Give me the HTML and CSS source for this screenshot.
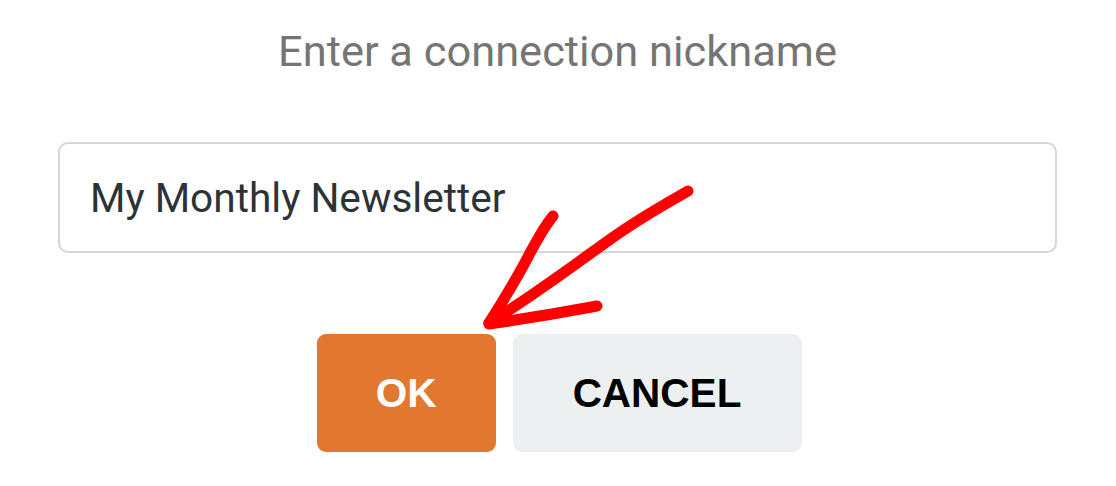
FILE: index.html
```html
<!DOCTYPE html>
<html lang="en">
<head>
<meta charset="UTF-8">
<title>Connection nickname</title>
<link rel="stylesheet" href="styles.css">
</head>
<body>
  <div class="dialog">
    <div class="title">Enter a connection nickname</div>
    <div class="field">My Monthly Newsletter</div>
    <div class="actions">
      <button class="btn ok">OK</button>
      <button class="btn cancel">CANCEL</button>
    </div>

    <svg class="arrow" width="1116" height="486" viewBox="0 0 1116 486">
      <path d="M688 191 C660 207 640 218 612 238 C570 268 530 298 489 323" />
      <path d="M553 216 C540 232 532 250 522 268 C512 286 500 306 489 323" />
      <path d="M597 306 C565 312 530 318 489 324" />
    </svg>
  </div>
</body>
</html>
```

FILE: styles.css
```css
body {
  margin: 0;
  background: #fff;
  font-family: Roboto, "Liberation Sans", sans-serif;
}

.dialog {
  position: relative;
  width: 1116px;
  height: 486px;
  padding: 0 59px 0 58px;
  box-sizing: border-box;
}

.title {
  text-align: center;
  font-size: 43.4px;
  line-height: 52px;
  padding-top: 26px;
  color: #757575;
}

.field {
  margin-top: 64px;
  height: 111px;
  box-sizing: border-box;
  border: 2px solid #d6d6d6;
  border-radius: 10px;
  padding: 0 30px;
  display: flex;
  align-items: center;
  font-size: 40.6px;
  color: #2c3338;
}

.actions {
  display: flex;
  justify-content: center;
  gap: 17px;
  margin-top: 81px;
  padding-left: 3px;
}

.btn {
  border: none;
  border-radius: 9px;
  height: 118px;
  font-family: "Liberation Sans", Arial, sans-serif;
  font-weight: bold;
  font-size: 40.5px;
  padding-top: 2px;
  cursor: pointer;
}

.ok {
  width: 179px;
  background: #e27730;
  color: #fff;
}

.cancel {
  width: 289px;
  background: #edf0f1;
  color: #000;
}

.arrow {
  position: absolute;
  top: 0;
  left: 0;
  pointer-events: none;
}

.arrow path {
  fill: none;
  stroke: #ff0000;
  stroke-width: 11;
  stroke-linecap: round;
  stroke-linejoin: round;
}
```
